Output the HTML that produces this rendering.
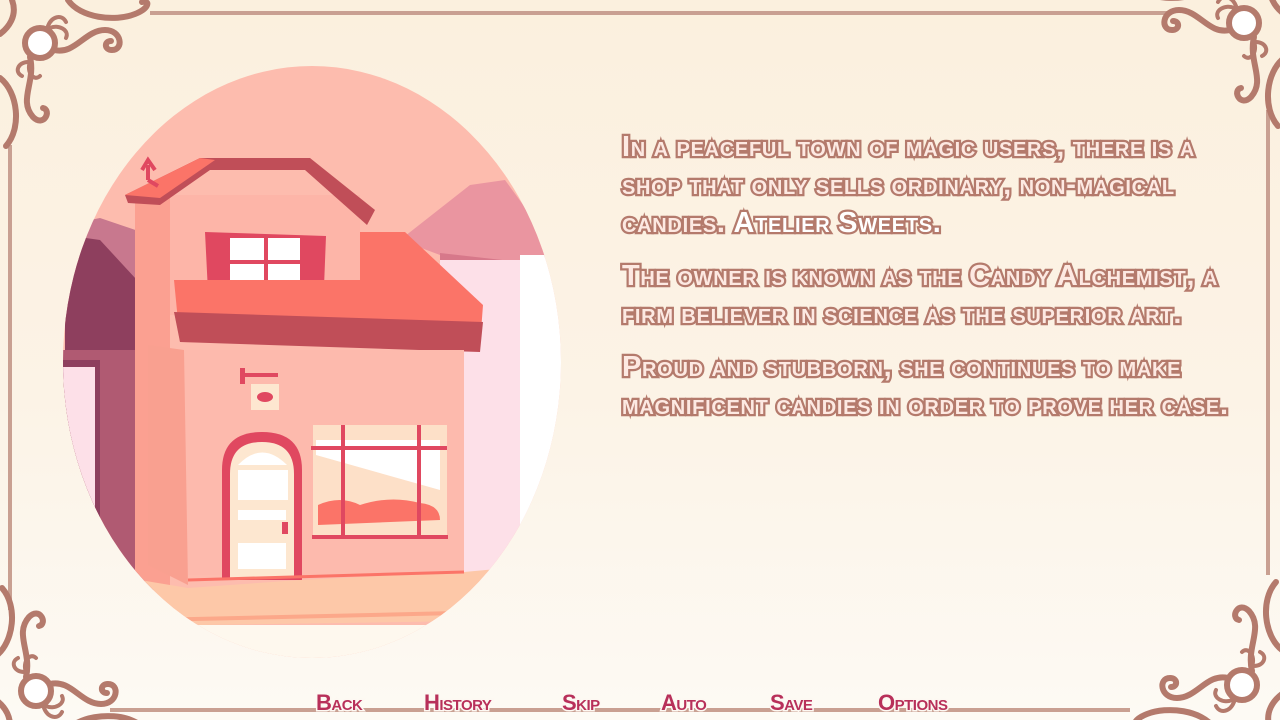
<!DOCTYPE html>
<html><head><meta charset="utf-8">
<style>
html,body{margin:0;padding:0}
body{width:1280px;height:720px;overflow:hidden;position:relative;background:linear-gradient(#fbf0de 0%,#fcf3e6 55%,#fdfaf4 100%);font-family:"Liberation Sans",sans-serif}
svg{position:absolute;left:0;top:0}
.txt{position:absolute;left:622px;top:128px;white-space:nowrap;font-weight:bold;font-size:29px;line-height:38px;font-variant:small-caps;letter-spacing:0.7px;color:#fde9e2;-webkit-text-stroke:4.5px #b47a6c;paint-order:stroke fill;word-spacing:-1px}
.txt p{margin:0 0 15px 0}
.txt b{color:#fff}
.menu{position:absolute;top:690px;font-weight:bold;font-size:22px;font-variant:small-caps;color:#b8305a;letter-spacing:-0.5px;-webkit-text-stroke:3px #fdf8f2;paint-order:stroke fill}
</style></head><body>
<svg width="1280" height="720" viewBox="0 0 1280 720">
<defs>
<clipPath id="egg"><ellipse cx="312" cy="362" rx="249" ry="296"/></clipPath>
<g id="orn" fill="none" stroke="#b47a6c" stroke-width="6" stroke-linecap="round">
<path d="M54,50 C75,55 85,30 105,30 C122,30 124,50 112,50 C104,50 104,41 111,41"/>
<path d="M68,0 C80,18 115,22 135,14 C150,8 150,0 142,2"/>
<path d="M30,57 C36,82 18,100 33,117 C44,128 52,110 43,108"/>
<path d="M0,78 C18,92 22,128 6,146"/>
<path d="M12,0 C18,16 8,28 0,34"/>
<path d="M48,26 C52,16 62,14 66,22 M50,28 C58,24 70,30 66,38" stroke-width="4"/>
<path d="M28,62 C18,62 14,72 22,76 M30,62 C26,72 34,82 40,76" stroke-width="4"/>
<circle cx="40" cy="43" r="15" fill="#fff"/>
</g>
</defs>
<g stroke="#c9a092" stroke-width="4">
<line x1="150" y1="13" x2="1170" y2="13"/>
<line x1="10" y1="145" x2="10" y2="610"/>
<line x1="1268" y1="110" x2="1268" y2="575"/>
<line x1="110" y1="710" x2="1130" y2="710"/>
</g>
<use href="#orn"/>
<use href="#orn" transform="translate(1280,0) scale(-1,1) translate(-4,-20)"/>
<use href="#orn" transform="translate(0,720) scale(1,-1) translate(-4,-14)"/>
<use href="#orn" transform="translate(1280,720) scale(-1,-1) translate(-2,-8)"/>
<g clip-path="url(#egg)">
<rect x="60" y="60" width="510" height="600" fill="#fdbcae"/>
<polygon points="60,60 250,60 140,132 60,122" fill="#fbefdf"/>
<polygon points="400,240 470,185 505,180 545,235 545,270 520,262 440,255" fill="#ea95a0"/>
<polygon points="440,253 520,262 545,270 545,280 440,275" fill="#d7788a"/>
<rect x="440" y="260" width="90" height="320" fill="#fde0e8"/>
<rect x="520" y="255" width="60" height="400" fill="#fff"/>
<polygon points="65,225 100,218 150,235 160,365 65,365" fill="#c8788e"/>
<polygon points="65,235 100,240 160,305 160,350 65,350" fill="#8e3f5e"/>
<rect x="60" y="350" width="95" height="240" fill="#b05a72"/>
<rect x="60" y="360" width="40" height="230" fill="#8e3f5e"/>
<rect x="60" y="367" width="35" height="220" fill="#fde0e8"/>
<rect x="135" y="195" width="225" height="120" fill="#fdb5a8"/>
<rect x="135" y="195" width="35" height="390" fill="#fba091"/>
<polygon points="125,195 200,158 310,158 375,210 367,225 305,170 210,170 160,205 128,203" fill="#c04e58"/>
<polygon points="125,195 200,158 215,160 160,198" fill="#fb7468"/>
<path d="M148,180 L148,165 M142,170 L148,160 L155,170 M148,180 L158,186" stroke="#e04860" stroke-width="4" fill="none"/>
<polygon points="205,232 326,236 324,287 208,292" fill="#e04860"/>
<rect x="230" y="238" width="70" height="46" fill="#fff"/>
<line x1="266" y1="236" x2="266" y2="286" stroke="#e04860" stroke-width="4"/>
<line x1="230" y1="262" x2="300" y2="262" stroke="#e04860" stroke-width="4"/>
<polygon points="174,280 360,280 360,232 405,232 483,305 480,345 180,342" fill="#fb7468"/>
<polygon points="174,312 483,322 480,352 180,342" fill="#c04e58"/>
<rect x="184" y="350" width="280" height="225" fill="#fdbaad"/>
<polygon points="148,345 184,350 188,585 148,565" fill="#f9a090"/>
<rect x="240" y="368" width="5" height="16" fill="#e04860"/>
<rect x="240" y="373" width="38" height="4" fill="#e04860"/>
<rect x="251" y="384" width="28" height="26" fill="#fde7d0"/>
<ellipse cx="265" cy="397" rx="8" ry="5" fill="#e04860"/>
<path d="M222,580 L222,470 Q222,432 262,432 Q302,432 302,470 L302,580 Z" fill="#e04860"/>
<path d="M230,578 L230,474 Q230,442 262,442 Q294,442 294,474 L294,578 Z" fill="#fde7d0"/>
<path d="M238,465 Q262,440 287,465 Z" fill="#fff"/>
<rect x="238" y="470" width="50" height="30" fill="#fff"/>
<rect x="238" y="510" width="48" height="10" fill="#fff"/>
<rect x="238" y="543" width="48" height="26" fill="#fff"/>
<rect x="282" y="522" width="6" height="12" fill="#e04860"/>
<rect x="313" y="425" width="134" height="112" fill="#fde0c8"/>
<polygon points="316,440 440,440 440,490 316,455" fill="#fff"/>
<path d="M318,505 Q340,495 360,505 Q390,495 420,503 Q440,505 440,520 L318,525 Z" fill="#fb7468"/>
<g stroke="#e04860" stroke-width="4"><line x1="343" y1="425" x2="343" y2="537"/><line x1="419" y1="425" x2="419" y2="537"/><line x1="311" y1="448" x2="447" y2="448"/><line x1="312" y1="537" x2="448" y2="537"/></g>
<polygon points="140,580 188,588 300,580 464,572 540,565 540,620 200,625 140,620" fill="#fdc8a8"/>
<line x1="188" y1="580" x2="464" y2="572" stroke="#fb7468" stroke-width="3"/>
<line x1="150" y1="620" x2="500" y2="612" stroke="#fca88a" stroke-width="4"/>
<rect x="60" y="625" width="510" height="40" fill="#fef8ee"/>
</g>
</svg>
<div class="txt">
<p>In a peaceful town of magic users, there is a<br>shop that only sells ordinary, non-magical<br>candies. <b>Atelier Sweets.</b></p>
<p>The owner is known as the Candy Alchemist, a<br>firm believer in science as the superior art.</p>
<p>Proud and stubborn, she continues to make<br>magnificent candies in order to prove her case.</p>
</div>
<div class="menu" style="left:316px">Back</div>
<div class="menu" style="left:424px">History</div>
<div class="menu" style="left:562px">Skip</div>
<div class="menu" style="left:661px">Auto</div>
<div class="menu" style="left:770px">Save</div>
<div class="menu" style="left:878px">Options</div>
</body></html>
